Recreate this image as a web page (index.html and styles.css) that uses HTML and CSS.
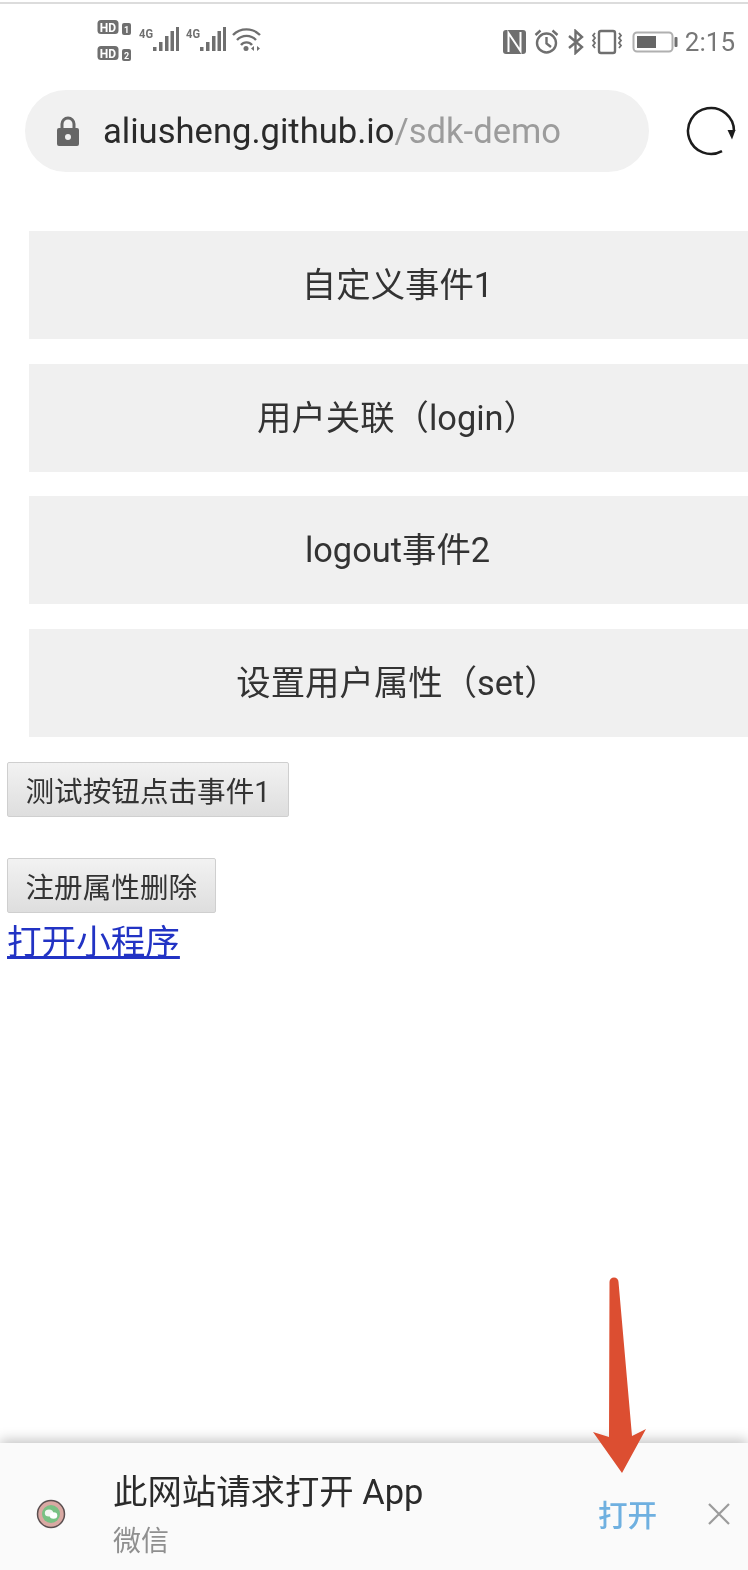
FILE: index.html
```html
<!DOCTYPE html>
<html lang="zh">
<head>
<meta charset="utf-8">
<title>sdk-demo</title>
<link rel="stylesheet" href="styles.css">
</head>
<body>
<div class="topline"></div>
<header class="status">
  <svg class="status-left" width="165" height="44" viewBox="97 18 165 44" fill="#6f6f6f">
    <rect x="97.5" y="20" width="21" height="14" rx="3.5"/>
    <text x="108" y="31.500" class="hd">HD</text>
    <rect x="122" y="23" width="9" height="12" rx="2"/>
    <text x="126.5" y="33" class="sim">1</text>
    <rect x="97.5" y="46" width="21" height="14" rx="3.5"/>
    <text x="108" y="57.500" class="hd">HD</text>
    <rect x="122" y="49" width="9" height="12" rx="2"/>
    <text x="126.5" y="59" class="sim">2</text>
    <text x="146" y="38" class="net" textLength="14" lengthAdjust="spacingAndGlyphs">4G</text>
    <rect x="153" y="47" width="3.500" height="4"/><rect x="159" y="42" width="3.500" height="9"/><rect x="165" y="36" width="3.500" height="15"/><rect x="170.500" y="31" width="3.500" height="20"/><rect x="176" y="27" width="3" height="24"/>
    <text x="193" y="38" class="net" textLength="14" lengthAdjust="spacingAndGlyphs">4G</text>
    <rect x="200" y="47" width="3.500" height="4"/><rect x="206" y="42" width="3.500" height="9"/><rect x="212" y="36" width="3.500" height="15"/><rect x="217.500" y="31" width="3.500" height="20"/><rect x="223" y="27" width="3" height="24"/>
    <g fill="none" stroke="#6f6f6f" stroke-width="2.400">
      <path d="M233 35a19 19 0 0 1 27 0"/>
      <path d="M237 40a13 13 0 0 1 19 0"/>
      <path d="M241 45a7 7 0 0 1 11 0"/>
    </g>
    <circle cx="246" cy="48.500" r="2.500"/>
    <path d="M254 46l-3 2.500 3 2.500zM257 46l3 2.500-3 2.500z"/>
  </svg>
  <div class="status-right">
    <svg width="176" height="26" viewBox="503 27 176 26">
      <rect x="503" y="28" width="23" height="24" rx="3" fill="#6f6f6f"/>
      <path fill="none" stroke="#fff" stroke-width="2" d="M508.500 50V31l12 18V30"/>
      <g fill="none" stroke="#6f6f6f" stroke-width="2.400">
        <circle cx="546.500" cy="41" r="9.500"/>
        <path d="M546.500 35v6.500l4.500 3.500"/>
        <path d="M535.500 33l5-4.500M557.500 33l-5-4.500"/>
        <path d="M569 34l13 11-6.500 6V29l6.500 6-13 11"/>
        <rect x="599" y="29" width="16" height="22" rx="2"/>
        <path d="M595 31l-2 2.500 2 2.500-2 2.500 2 2.500-2 2.500 2 2.500M619 31l2 2.500-2 2.500 2 2.500-2 2.500 2 2.500-2 2.500" stroke-width="1.800"/>
        <rect x="633.500" y="30.500" width="39" height="19" rx="3.500" stroke="#b0b0b0" stroke-width="2"/>
      </g>
      <rect x="637" y="34" width="19" height="12" fill="#666"/>
      <rect x="674.500" y="35" width="3" height="10" rx="1" fill="#6f6f6f"/>
    </svg>
    <span class="clock">2:15</span>
  </div>
</header>
<div class="address-row">
  <div class="pill">
    <svg class="lock" width="22" height="30" viewBox="0 0 22 30">
      <path fill="none" stroke="#666" stroke-width="3" d="M5 13V8a6 6 0 0 1 12 0v5"/>
      <path fill="#666" fill-rule="evenodd" d="M2 12h18a2 2 0 0 1 2 2v14a2 2 0 0 1-2 2H2a2 2 0 0 1-2-2V14a2 2 0 0 1 2-2zm9 6a3 3 0 1 0 0 6 3 3 0 0 0 0-6z"/>
    </svg>
    <span class="url">aliusheng.github.io<span class="url-path">/sdk-demo</span></span>
  </div>
  <svg class="reload" width="54" height="50" viewBox="0 0 54 50">
    <path fill="none" stroke="#1c1c1c" stroke-width="2.500" d="M36 45.200A23 23 0 1 1 48 25"/>
    <path fill="#1c1c1c" d="M41.500 24h8l-3.500 9.500z"/>
  </svg>
</div>
<main class="actions">
  <div class="action">自定义事件1</div>
  <div class="action">用户关联（login）</div>
  <div class="action">logout事件2</div>
  <div class="action">设置用户属性（set）</div>
</main>
<section class="legacy">
  <button class="native">测试按钮点击事件1</button>
  <button class="native second">注册属性删除</button>
  <a class="mini-link" href="#">打开小程序</a>
</section>
<footer class="banner">
  <svg class="app-icon" width="30" height="30" viewBox="0 0 30 30">
    <circle cx="15" cy="15" r="13.500" fill="#d9a9a3" stroke="#5a4f50" stroke-width="1.500"/>
    <circle cx="15" cy="15" r="9" fill="#79c184"/>
    <ellipse cx="13" cy="14" rx="4.200" ry="3.500" fill="#f2f7f2"/>
    <ellipse cx="17.500" cy="16.500" rx="3.800" ry="3.200" fill="#ffffff"/>
  </svg>
  <div class="banner-text">
    <div class="banner-title">此网站请求打开 App</div>
    <div class="banner-sub">微信</div>
  </div>
  <span class="banner-open">打开</span>
  <svg class="banner-close" width="24" height="24" viewBox="0 0 24 24">
    <path fill="none" stroke="#9b9b9b" stroke-width="2.200" d="M2 2l20 20M22 2L2 22"/>
  </svg>
</footer>
<svg class="arrow" width="60" height="200" viewBox="590 1275 60 200">
  <path fill="#dc4e31" d="M609.500 1282a4.500 4.500 0 0 1 9 0l13.500 154 14-7-24 44-29-41 16 5z"/>
</svg>
</body>
</html>
```
FILE: styles.css
```css
* { box-sizing: border-box; }
html, body { margin: 0; padding: 0; }
body {
  position: relative;
  width: 748px;
  height: 1570px;
  overflow: hidden;
  display: flex;
  flex-direction: column;
  background: #fff;
  color: #333;
  font-family: Roboto, "Noto Sans CJK SC", sans-serif;
  filter: blur(.45px);
}
.topline {
  height: 2px;
  margin-top: 2px;
  background: #dcdcdc;
  flex: none;
}
.status {
  flex: none;
  height: 86px;
  padding: 14px 13px 0 97px;
  display: flex;
  justify-content: space-between;
  align-items: flex-start;
}
.status-left text { font-family: "Roboto", sans-serif; font-weight: 700; text-anchor: middle; }
.hd { font-size: 12px; fill: #fff; }
.sim { font-size: 9px; fill: #fff; }
.net { font-size: 13px; font-weight: 500; fill: #6f6f6f; }
.status-right {
  display: flex;
  align-items: center;
  gap: 6px;
  margin-top: 9px;
}
.clock {
  font-size: 26px;
  line-height: 30px;
  color: #777;
}
.address-row {
  flex: none;
  display: flex;
  align-items: center;
  padding-left: 25px;
  gap: 37px;
}
.pill {
  flex: none;
  width: 624px;
  height: 82px;
  border-radius: 41px;
  background: #f1f1f1;
  display: flex;
  align-items: center;
  padding-left: 32px;
  gap: 24px;
}
.url {
  font-size: 34.600px;
  color: #2a2a2a;
  white-space: nowrap;
}
.url-path { color: #9c9c9c; }
.reload { flex: none; }
.actions {
  flex: none;
  margin: 59px 0 0 29px;
  display: flex;
  flex-direction: column;
  gap: 24.700px;
}
.action {
  flex: none;
  width: 737px;
  height: 108px;
  padding-bottom: 6px;
  background: #f0f0f0;
  display: flex;
  align-items: center;
  justify-content: center;
  font-size: 34.400px;
  color: #333;
}
.legacy {
  flex: none;
  margin: 25px 0 0 7px;
  display: flex;
  flex-direction: column;
  align-items: flex-start;
}
.native {
  height: 55px;
  padding: 0 17.500px;
  border: 1px solid #cfcfcf;
  border-radius: 2px;
  background: linear-gradient(#f2f2f2, #dedede);
  font-family: inherit;
  font-size: 28.600px;
  color: #333;
}
.second { margin-top: 41px; }
.mini-link {
  font-size: 34.600px;
  line-height: 58px;
  color: #2233c4;
}
.banner {
  flex: none;
  margin-top: auto;
  height: 127px;
  padding-top: 14px;
  background: #fafafa;
  box-shadow: 0 -3px 12px rgba(0, 0, 0, .24);
  display: flex;
  align-items: center;
  position: relative;
}
.app-icon { flex: none; margin-left: 36px; }
.banner-text { flex: none; margin: 6px 0 0 47px; width: 485px; }
.banner-title {
  font-size: 34.400px;
  line-height: 50px;
  color: #2b2b2b;
}
.banner-sub {
  font-size: 28px;
  line-height: 50px;
  color: #8f8f8f;
}
.banner-open {
  font-size: 29.600px;
  font-weight: 500;
  color: #6fb0e0;
  flex: none;
}
.banner-close { flex: none; margin-left: 50px; }
.arrow {
  position: absolute;
  left: 590px;
  top: 1275px;
}
```
